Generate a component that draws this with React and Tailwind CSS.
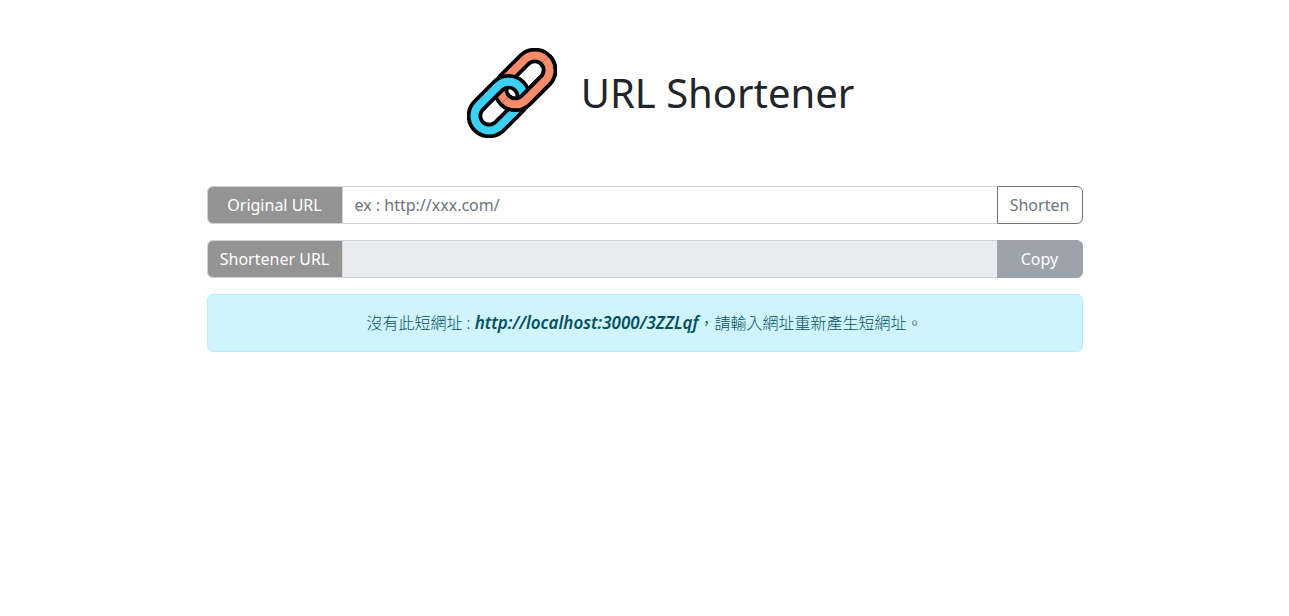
function LinkLogo() {
  return (
    <svg viewBox="0 0 90 90" className="size-[90px] shrink-0" aria-hidden="true">
      <defs>
        <clipPath id="lower-half">
          <path d="M90 0V90H0Z" />
        </clipPath>
        <g id="top-link" fill="none">
          <rect x="-28.5" y="-14.7" width="57" height="29.4" rx="14.7" transform="translate(58.1 31.9) rotate(-45)" stroke="#000" strokeWidth="15.4" />
          <rect x="-28.5" y="-14.7" width="57" height="29.4" rx="14.7" transform="translate(58.1 31.9) rotate(-45)" stroke="#f78c6c" strokeWidth="8" />
        </g>
      </defs>
      <use href="#top-link" />
      <g fill="none">
        <rect x="-28.5" y="-14.7" width="57" height="29.4" rx="14.7" transform="translate(31.9 58.1) rotate(-45)" stroke="#000" strokeWidth="15.4" />
        <rect x="-28.5" y="-14.7" width="57" height="29.4" rx="14.7" transform="translate(31.9 58.1) rotate(-45)" stroke="#3dd0f5" strokeWidth="8" />
      </g>
      <use href="#top-link" clipPath="url(#lower-half)" />
    </svg>
  );
}

const labelClass =
  "flex w-34 shrink-0 items-center justify-center rounded-l-md border border-[#ced4da] bg-[#949494] text-white";
const inputClass =
  "-ml-px min-w-0 flex-1 border border-[#ced4da] px-3 text-[#212529] outline-none placeholder:text-[#6c757d]";
const buttonClass = "-ml-px w-[86px] shrink-0 rounded-r-md border";

export default function App() {
  return (
    <main className="mx-auto max-w-[908px] px-4 pt-12 font-['Noto_Sans','Noto_Sans_CJK_TC',sans-serif] text-base text-[#212529]">
      <header className="mb-12 flex items-center justify-center gap-6 pl-8">
        <LinkLogo />
        <h1 className="text-[40px] leading-12 font-normal">URL Shortener</h1>
      </header>
      <form className="flex flex-col gap-4" onSubmit={(e) => e.preventDefault()}>
        <div className="flex h-[38px]">
          <label htmlFor="original" className={labelClass}>Original URL</label>
          <input id="original" type="text" placeholder="ex : http://xxx.com/" className={`${inputClass} bg-white`} />
          <button type="submit" className={`${buttonClass} border-[#6c757d] bg-white text-[#6c757d]`}>Shorten</button>
        </div>
        <div className="flex h-[38px]">
          <label htmlFor="short" className={labelClass}>Shortener URL</label>
          <input id="short" type="text" readOnly className={`${inputClass} bg-[#e9ecef]`} />
          <button type="button" disabled className={`${buttonClass} border-[#9da3aa] bg-[#9da3aa] text-white`}>Copy</button>
        </div>
      </form>
      <div role="alert" className="mt-4 rounded-md border border-[#b6effb] bg-[#cff4fc] p-4 text-center leading-6 font-light text-[#055160]">
        沒有此短網址 : <em className="text-[17px] font-semibold">http://localhost:3000/3ZZLqf</em>，請輸入網址重新產生短網址。
      </div>
    </main>
  );
}
